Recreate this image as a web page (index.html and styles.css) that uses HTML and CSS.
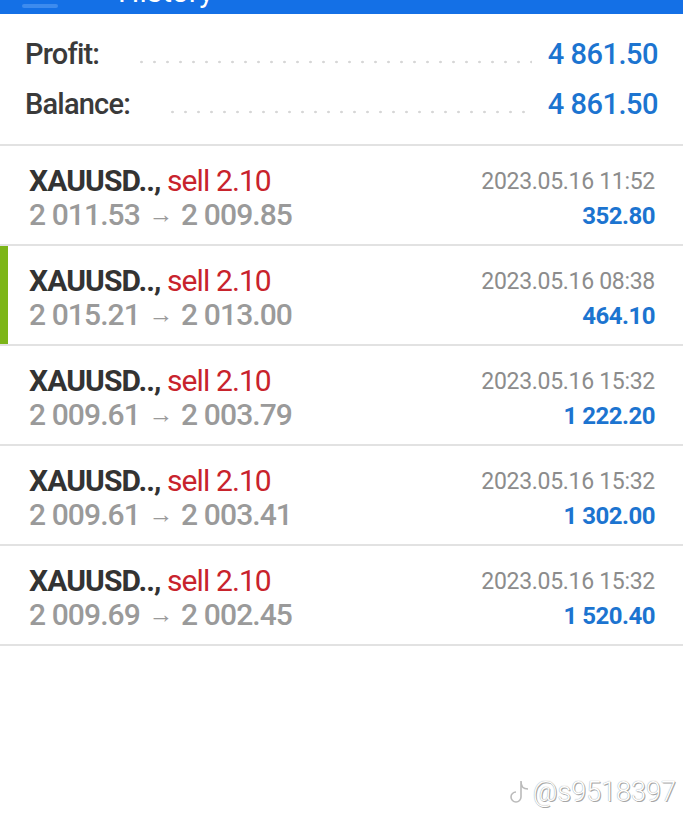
FILE: index.html
```html
<!DOCTYPE html>
<html lang="en">
<head>
    <meta charset="UTF-8">
    <meta name="viewport" content="width=device-width, initial-scale=1.0">
    <title>History</title>
    <link rel="stylesheet" href="styles.css">
</head>
<body>
    <div class="topbar">
        <span class="topbar-icon"></span>
        <span class="topbar-title">History</span>
    </div>

    <div class="summary">
        <div class="summary-row">
            <span class="summary-label">Profit:</span>
            <span class="leader"></span>
            <span class="summary-value">4 861.50</span>
        </div>
        <div class="summary-row">
            <span class="summary-label">Balance:</span>
            <span class="leader"></span>
            <span class="summary-value">4 861.50</span>
        </div>
    </div>

    <div class="deals">
        <div class="deal">
            <div class="deal-left">
                <div class="deal-title"><b class="symbol">XAUUSD..,</b> <span class="side">sell 2.10</span></div>
                <div class="deal-prices">2 011.53 <span class="arrow">&rarr;</span> 2 009.85</div>
            </div>
            <div class="deal-right">
                <div class="deal-time">2023.05.16 11:52</div>
                <div class="deal-profit">352.80</div>
            </div>
        </div>
        <div class="deal selected">
            <div class="deal-left">
                <div class="deal-title"><b class="symbol">XAUUSD..,</b> <span class="side">sell 2.10</span></div>
                <div class="deal-prices">2 015.21 <span class="arrow">&rarr;</span> 2 013.00</div>
            </div>
            <div class="deal-right">
                <div class="deal-time">2023.05.16 08:38</div>
                <div class="deal-profit">464.10</div>
            </div>
        </div>
        <div class="deal">
            <div class="deal-left">
                <div class="deal-title"><b class="symbol">XAUUSD..,</b> <span class="side">sell 2.10</span></div>
                <div class="deal-prices">2 009.61 <span class="arrow">&rarr;</span> 2 003.79</div>
            </div>
            <div class="deal-right">
                <div class="deal-time">2023.05.16 15:32</div>
                <div class="deal-profit">1 222.20</div>
            </div>
        </div>
        <div class="deal">
            <div class="deal-left">
                <div class="deal-title"><b class="symbol">XAUUSD..,</b> <span class="side">sell 2.10</span></div>
                <div class="deal-prices">2 009.61 <span class="arrow">&rarr;</span> 2 003.41</div>
            </div>
            <div class="deal-right">
                <div class="deal-time">2023.05.16 15:32</div>
                <div class="deal-profit">1 302.00</div>
            </div>
        </div>
        <div class="deal">
            <div class="deal-left">
                <div class="deal-title"><b class="symbol">XAUUSD..,</b> <span class="side">sell 2.10</span></div>
                <div class="deal-prices">2 009.69 <span class="arrow">&rarr;</span> 2 002.45</div>
            </div>
            <div class="deal-right">
                <div class="deal-time">2023.05.16 15:32</div>
                <div class="deal-profit">1 520.40</div>
            </div>
        </div>
    </div>

    <div class="watermark">
        <svg class="watermark-icon" width="22" height="26" viewBox="0 0 22 26">
            <path d="M12 2 C12 8 14 10 19 10 M12 2 V18 A5 5 0 1 1 7 13" fill="none" stroke="#bbb" stroke-width="1.6"/>
        </svg>
        <span>@s9518397</span>
    </div>
</body>
</html>
```

FILE: styles.css
```css
body {
    margin: 0;
    background-color: #fff;
    font-family: Roboto, "Noto Sans", sans-serif;
    min-height: 832px;
    position: relative;
}

/* Top app bar, mostly cut off */
.topbar {
    height: 14px;
    background-color: #1470e6;
    overflow: hidden;
    display: flex;
    align-items: flex-start;
    padding-left: 22px;
    gap: 60px;
}
.topbar-icon {
    width: 36px;
    height: 4px;
    margin-top: 4px;
    background-color: #3d8bee;
    border-radius: 2px;
}
.topbar-title {
    color: #fff;
    font-size: 30px;
    line-height: 30px;
    margin-top: -23px;
}

/* Profit / Balance block */
.summary {
    padding: 23px 25px 21px 25px;
    border-bottom: 2px solid #e2e2e2;
    display: flex;
    flex-direction: column;
    gap: 14px;
}
.summary-row {
    display: flex;
    align-items: baseline;
    height: 36px;
}
.summary-label {
    font-size: 29px;
    font-weight: 500;
    color: #3a3a3a;
    letter-spacing: -0.8px;
}
.leader {
    flex: 1;
    margin: 0 16px 0 36px;
    height: 4px;
    background-image: radial-gradient(circle, #d6d6d6 1px, transparent 1.6px);
    background-size: 13px 4px;
    background-repeat: repeat-x;
}
.summary-value {
    font-size: 29px;
    font-weight: 500;
    color: #1c74d0;
    letter-spacing: -0.5px;
}

/* Deals list */
.deal {
    display: flex;
    justify-content: space-between;
    align-items: flex-start;
    height: 100px;
    box-sizing: border-box;
    padding: 18px 28px 0 29px;
    border-bottom: 2px solid #e2e2e2;
    position: relative;
}
.deal.selected::before {
    content: "";
    position: absolute;
    left: 0;
    top: 0;
    bottom: 0;
    width: 8px;
    background-color: #7cb518;
}
.deal-title {
    font-size: 30px;
    line-height: 34px;
    letter-spacing: -0.9px;
    white-space: nowrap;
}
.symbol {
    color: #333;
    font-weight: 700;
}
.side {
    color: #c8232c;
}
.deal-prices {
    font-size: 30px;
    line-height: 34px;
    font-weight: 500;
    color: #9a9a9a;
    letter-spacing: -0.9px;
    white-space: nowrap;
}
.arrow {
    font-size: 25px;
    font-weight: 400;
    padding: 0 2px;
    vertical-align: 2px;
}
.deal-right {
    text-align: right;
}
.deal-time {
    font-size: 23px;
    line-height: 36px;
    color: #8c8c8c;
    letter-spacing: -0.3px;
}
.deal-profit {
    font-size: 24px;
    line-height: 32px;
    font-weight: 700;
    color: #1c74d0;
    letter-spacing: -0.5px;
}

/* Douyin style watermark */
.watermark {
    position: absolute;
    right: 7px;
    top: 776px;
    display: flex;
    align-items: center;
    gap: 2px;
    font-size: 27px;
    font-weight: 300;
    color: #fff;
    text-shadow: 0 0 1px #888, 1px 1px 0 #aaa;
}
```
